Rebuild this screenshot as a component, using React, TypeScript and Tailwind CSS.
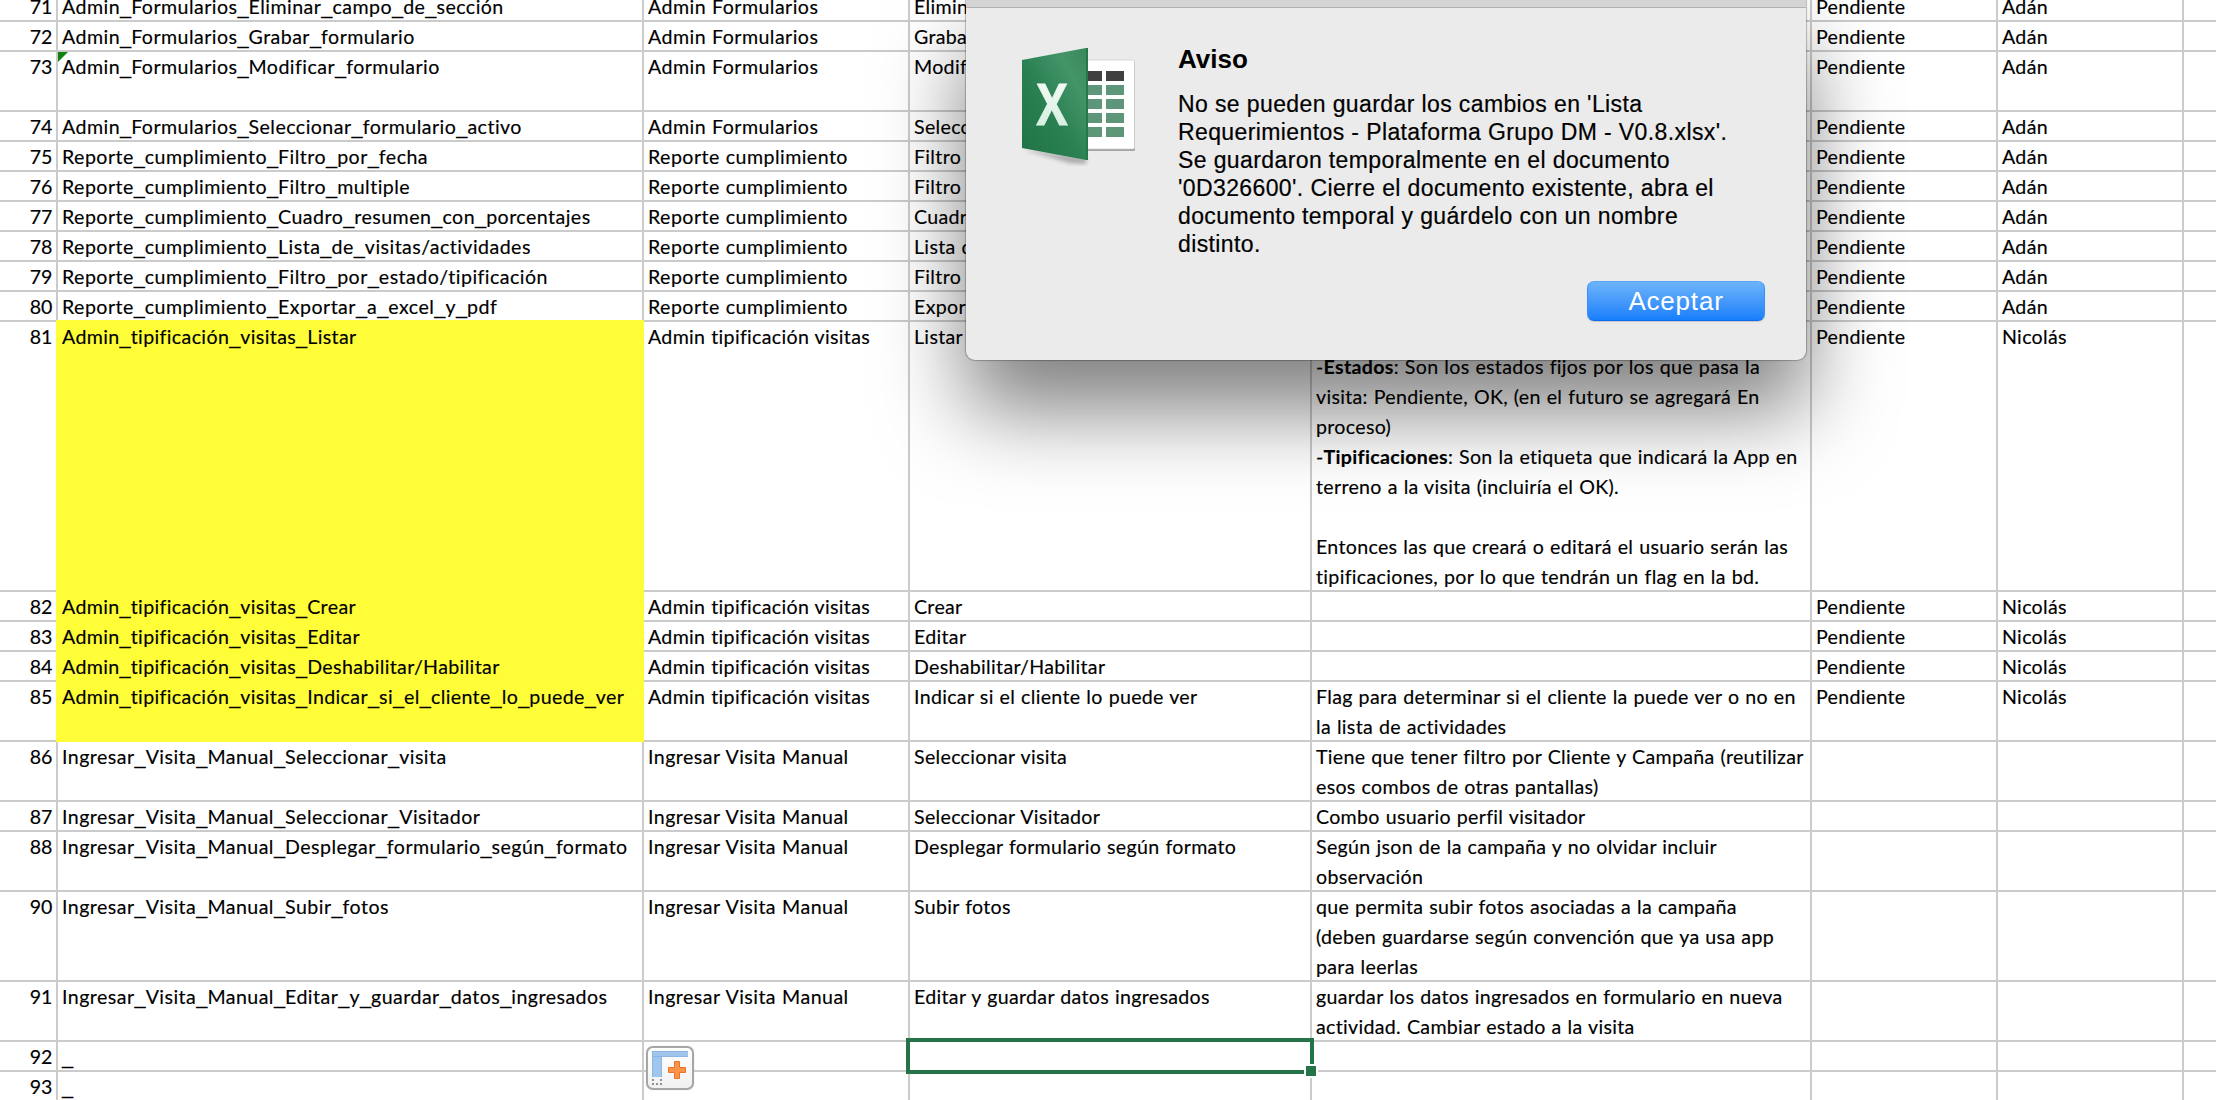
import { Fragment, ReactNode } from 'react';

type Row = {
  n: number;
  h: string;
  name: string;
  module?: string;
  action?: string;
  notes?: ReactNode[];
  status?: string;
  owner?: string;
  marked?: boolean;
  flagged?: boolean;
};

const H1 = 'h-[30px]';
const H2 = 'h-[60px]';
const H3 = 'h-[90px]';
const H9 = 'h-[270px]';

const FORM = { module: 'Admin Formularios', status: 'Pendiente', owner: 'Adán' };
const REPORT = { module: 'Reporte cumplimiento', status: 'Pendiente', owner: 'Adán' };
const TYPES = { module: 'Admin tipificación visitas', status: 'Pendiente', owner: 'Nicolás', marked: true };
const MANUAL = { module: 'Ingresar Visita Manual' };

const ROWS: Row[] = [
  { n: 71, h: H1, name: 'Admin_Formularios_Eliminar_campo_de_sección', action: 'Eliminar campo', ...FORM },
  { n: 72, h: H1, name: 'Admin_Formularios_Grabar_formulario', action: 'Grabar formulario', ...FORM },
  { n: 73, h: H2, name: 'Admin_Formularios_Modificar_formulario', action: 'Modificar', flagged: true, ...FORM },
  { n: 74, h: H1, name: 'Admin_Formularios_Seleccionar_formulario_activo', action: 'Seleccionar', ...FORM },
  { n: 75, h: H1, name: 'Reporte_cumplimiento_Filtro_por_fecha', action: 'Filtro por fecha', ...REPORT },
  { n: 76, h: H1, name: 'Reporte_cumplimiento_Filtro_multiple', action: 'Filtro multiple', ...REPORT },
  { n: 77, h: H1, name: 'Reporte_cumplimiento_Cuadro_resumen_con_porcentajes', action: 'Cuadro resumen', ...REPORT },
  { n: 78, h: H1, name: 'Reporte_cumplimiento_Lista_de_visitas/actividades', action: 'Lista de visitas', ...REPORT },
  { n: 79, h: H1, name: 'Reporte_cumplimiento_Filtro_por_estado/tipificación', action: 'Filtro por estado', ...REPORT },
  { n: 80, h: H1, name: 'Reporte_cumplimiento_Exportar_a_excel_y_pdf', action: 'Exportar a excel', ...REPORT },
  {
    n: 81, h: H9, name: 'Admin_tipificación_visitas_Listar', action: 'Listar', ...TYPES,
    notes: [
      '',
      <>-<b>Estados</b>: Son los estados fijos por los que pasa la</>,
      'visita: Pendiente, OK, (en el futuro se agregará En',
      'proceso)',
      <>-<b>Tipificaciones</b>: Son la etiqueta que indicará la App en</>,
      'terreno a la visita (incluiría el OK).',
      '',
      'Entonces las que creará o editará el usuario serán las',
      'tipificaciones, por lo que tendrán un flag en la bd.',
    ],
  },
  { n: 82, h: H1, name: 'Admin_tipificación_visitas_Crear', action: 'Crear', ...TYPES },
  { n: 83, h: H1, name: 'Admin_tipificación_visitas_Editar', action: 'Editar', ...TYPES },
  { n: 84, h: H1, name: 'Admin_tipificación_visitas_Deshabilitar/Habilitar', action: 'Deshabilitar/Habilitar', ...TYPES },
  {
    n: 85, h: H2, name: 'Admin_tipificación_visitas_Indicar_si_el_cliente_lo_puede_ver',
    action: 'Indicar si el cliente lo puede ver', ...TYPES,
    notes: ['Flag para determinar si el cliente la puede ver o no en', 'la lista de actividades'],
  },
  {
    n: 86, h: H2, name: 'Ingresar_Visita_Manual_Seleccionar_visita', action: 'Seleccionar visita', ...MANUAL,
    notes: ['Tiene que tener filtro por Cliente y Campaña (reutilizar', 'esos combos de otras pantallas)'],
  },
  {
    n: 87, h: H1, name: 'Ingresar_Visita_Manual_Seleccionar_Visitador', action: 'Seleccionar Visitador', ...MANUAL,
    notes: ['Combo usuario perfil visitador'],
  },
  {
    n: 88, h: H2, name: 'Ingresar_Visita_Manual_Desplegar_formulario_según_formato',
    action: 'Desplegar formulario según formato', ...MANUAL,
    notes: ['Según json de la campaña y no olvidar incluir', 'observación'],
  },
  {
    n: 90, h: H3, name: 'Ingresar_Visita_Manual_Subir_fotos', action: 'Subir fotos', ...MANUAL,
    notes: ['que permita subir fotos asociadas a la campaña', '(deben guardarse según convención que ya usa app', 'para leerlas'],
  },
  {
    n: 91, h: H2, name: 'Ingresar_Visita_Manual_Editar_y_guardar_datos_ingresados',
    action: 'Editar y guardar datos ingresados', ...MANUAL,
    notes: ['guardar los datos ingresados en formulario en nueva', 'actividad. Cambiar estado a la visita'],
  },
  { n: 92, h: H1, name: '_' },
  { n: 93, h: H1, name: '_' },
];

const CELL = 'shrink-0 border-r-2 border-b-2 border-[#cbcbcb] pl-1';

// Underscores are set in a font whose underscore is as wide as a digit.
function SnakeName({ text }: { text: string }) {
  return (
    <span className="relative">
      {text.split('_').map((part, i) => (
        <Fragment key={i}>
          {i > 0 && <span className="font-['Liberation_Sans',sans-serif] text-[20px] leading-none tracking-normal">_</span>}
          {part}
        </Fragment>
      ))}
    </span>
  );
}

function SheetRow({ row }: { row: Row }) {
  return (
    <div className={`flex shrink-0 ${row.h}`}>
      <div className="w-[58px] shrink-0 border-r-2 border-b-2 border-[#cbcbcb] pr-1 text-right tracking-[-0.3px]">{row.n}</div>
      <div
        className={
          row.marked
            ? 'relative w-[586px] shrink-0 pl-1 tracking-[0.36px] before:absolute before:-top-[2px] before:-left-[2px] before:box-content before:h-full before:w-[588px] before:bg-[#fffd38] before:pb-[2px]'
            : `relative w-[586px] tracking-[0.45px] ${CELL}`
        }
      >
        {row.flagged && (
          <span className="absolute top-0 left-0 h-[10px] w-[10px] bg-[#108010] [clip-path:polygon(0_0,100%_0,0_100%)]" />
        )}
        <SnakeName text={row.name} />
      </div>
      <div className={`w-[266px] ${row.marked ? '' : 'tracking-[0.45px]'} ${CELL}`}>{row.module}</div>
      <div className={`w-[402px] ${CELL}`}>{row.action}</div>
      <div className={`w-[500px] ${CELL}`}>
        {row.notes?.map((line, i) => (
          <div key={i} className="h-[30px]">{line}</div>
        ))}
      </div>
      <div className={`w-[186px] ${CELL}`}>{row.status}</div>
      <div className={`w-[186px] ${CELL}`}>{row.owner}</div>
      <div className="grow border-b-2 border-[#cbcbcb]" />
    </div>
  );
}

function ExcelIcon() {
  return (
    <svg className="h-[124px] w-[124px]" viewBox="0 0 124 124">
      <defs>
        <linearGradient id="cover" x1="0" y1="1" x2="1" y2="0">
          <stop offset="0" stopColor="#1f7245" />
          <stop offset="0.45" stopColor="#2b8153" />
          <stop offset="0.75" stopColor="#439468" />
          <stop offset="1" stopColor="#38885b" />
        </linearGradient>
        <linearGradient id="letter" x1="0" y1="0" x2="0" y2="1">
          <stop offset="0" stopColor="#ffffff" />
          <stop offset="1" stopColor="#cdebd9" />
        </linearGradient>
        <filter id="soft" x="-20%" y="-20%" width="140%" height="140%">
          <feGaussianBlur stdDeviation="2" />
        </filter>
      </defs>
      <path d="M4 107 L68 116 L68 122 L52 121 Z" fill="#000" opacity="0.28" filter="url(#soft)" />
      <rect x="60" y="19" width="57" height="90" rx="1.5" fill="#000" opacity="0.3" />
      <rect x="60" y="18" width="56.500" height="89" rx="1.5" fill="#fff" stroke="#c9c9c9" strokeWidth="0.7" />
      <rect x="62" y="29" width="22" height="10" fill="#404040" />
      <rect x="88" y="29" width="18" height="10" fill="#404040" />
      {[43, 57, 71, 85].map((y) => (
        <g key={y} fill="#5d9678">
          <rect x="62" y={y} width="22" height="10" />
          <rect x="88" y={y} width="18" height="10" />
        </g>
      ))}
      <path d="M4 18 L68 6 L70 6 L70 118 L68 118 L4 106 Z" fill="url(#cover)" />
      <path d="M68 6 L70 6 L70 118 L68 118 Z" fill="#24784a" />
      <text
        x="34"
        y="83"
        textAnchor="middle"
        fontFamily="'Open Sans', 'Noto Sans', sans-serif"
        fontWeight="700"
        fontSize="58"
        textLength="31"
        lengthAdjust="spacingAndGlyphs"
        fill="url(#letter)"
        stroke="url(#letter)"
        strokeWidth="0.8"
      >
        X
      </text>
    </svg>
  );
}

const MESSAGE = [
  "No se pueden guardar los cambios en 'Lista",
  "Requerimientos - Plataforma Grupo DM - V0.8.xlsx'.",
  'Se guardaron temporalmente en el documento',
  "'0D326600'. Cierre el documento existente, abra el",
  'documento temporal y guárdelo con un nombre',
  'distinto.',
];

function AlertDialog() {
  return (
    <div
      role="alertdialog"
      className="absolute top-0 left-[966px] flex h-[360px] w-[840px] flex-col overflow-visible rounded-b-[9px] bg-[#ebebeb] font-['Liberation_Sans',Arial,sans-serif] shadow-[0_0_1px_1px_rgba(0,0,0,0.25),0_50px_84px_rgba(0,0,0,0.5)]"
    >
      <div className="h-2 shrink-0 border-b border-[#b1b1b1] bg-[#d4d4d4]" />
      <div className="flex pt-[34px] pl-[52px]">
        <ExcelIcon />
        <div className="pl-[36px]">
          <h1 className="text-[26px] leading-[34px] font-bold">Aviso</h1>
          <div className="pt-[14px] text-[23px] leading-[28px] tracking-[0.39px] whitespace-nowrap [-webkit-text-stroke:0.2px_#000]">
            {MESSAGE.map((line) => (
              <p key={line}>{line}</p>
            ))}
          </div>
        </div>
      </div>
      <button className="absolute top-[281px] left-[621px] h-10 w-[178px] rounded-[7px] border border-t-[#5aa5f5] border-r-[#3a8ef5] border-b-[#0f68f0] border-l-[#3a8ef5] bg-linear-to-b from-[#6cb3fa] to-[#157efb] text-[26px] leading-[38px] tracking-[0.8px] text-white shadow-[0_1px_1px_rgba(0,0,0,0.15)]">
        Aceptar
      </button>
    </div>
  );
}

function Selection() {
  return (
    <div className="absolute top-[1038px] left-[906px] h-9 w-[408px] border-4 border-[#257449]">
      <span className="absolute right-[-8px] bottom-[-8px] box-content h-[10px] w-[10px] border-2 border-white bg-[#257449] bg-clip-padding" />
    </div>
  );
}

function QuickAddButton() {
  return (
    <div className="absolute top-[1046px] left-[646px] h-11 w-12 rounded-[7px] border-2 border-[#a6a6a6] bg-linear-to-b from-white to-[#f1f1f1] shadow-[0_0_1px_rgba(0,0,0,0.3)]">
      <svg className="h-10 w-11" viewBox="0 0 44 40">
        <path d="M4 3 H40 V9 H14 V29 H4 Z" fill="#a1c6ee" />
        <path d="M4 3.5 H40 M4 8.5 H40 M13.5 9 V29 M4.5 3 V29" stroke="#8fb6e2" strokeWidth="1" fill="none" />
        <path d="M26.500 13.500 H31.500 V19.500 H37.500 V24.500 H31.500 V30.500 H26.500 V24.500 H20.500 V19.500 H26.500 Z" fill="#fd9348" stroke="#e9732a" strokeWidth="1" />
        <g fill="#909090">
          <rect x="4" y="31" width="2" height="2" />
          <rect x="12" y="31" width="2" height="2" />
          <rect x="4" y="35" width="2" height="2" />
          <rect x="8" y="35" width="2" height="2" />
          <rect x="12" y="35" width="2" height="2" />
        </g>
      </svg>
    </div>
  );
}

export default function App() {
  return (
    <div className="relative isolate h-[1100px] w-[2216px] overflow-hidden bg-white text-black">
      <div className="isolate -mt-2 flex flex-col font-[Lato,Carlito,sans-serif] text-[19.6px] leading-[30px] tracking-[0.31px] whitespace-nowrap [-webkit-text-stroke:0.15px_#000] [word-spacing:0.6px]">
        {ROWS.map((row) => (
          <SheetRow key={row.n} row={row} />
        ))}
      </div>
      <AlertDialog />
      <Selection />
      <QuickAddButton />
    </div>
  );
}
